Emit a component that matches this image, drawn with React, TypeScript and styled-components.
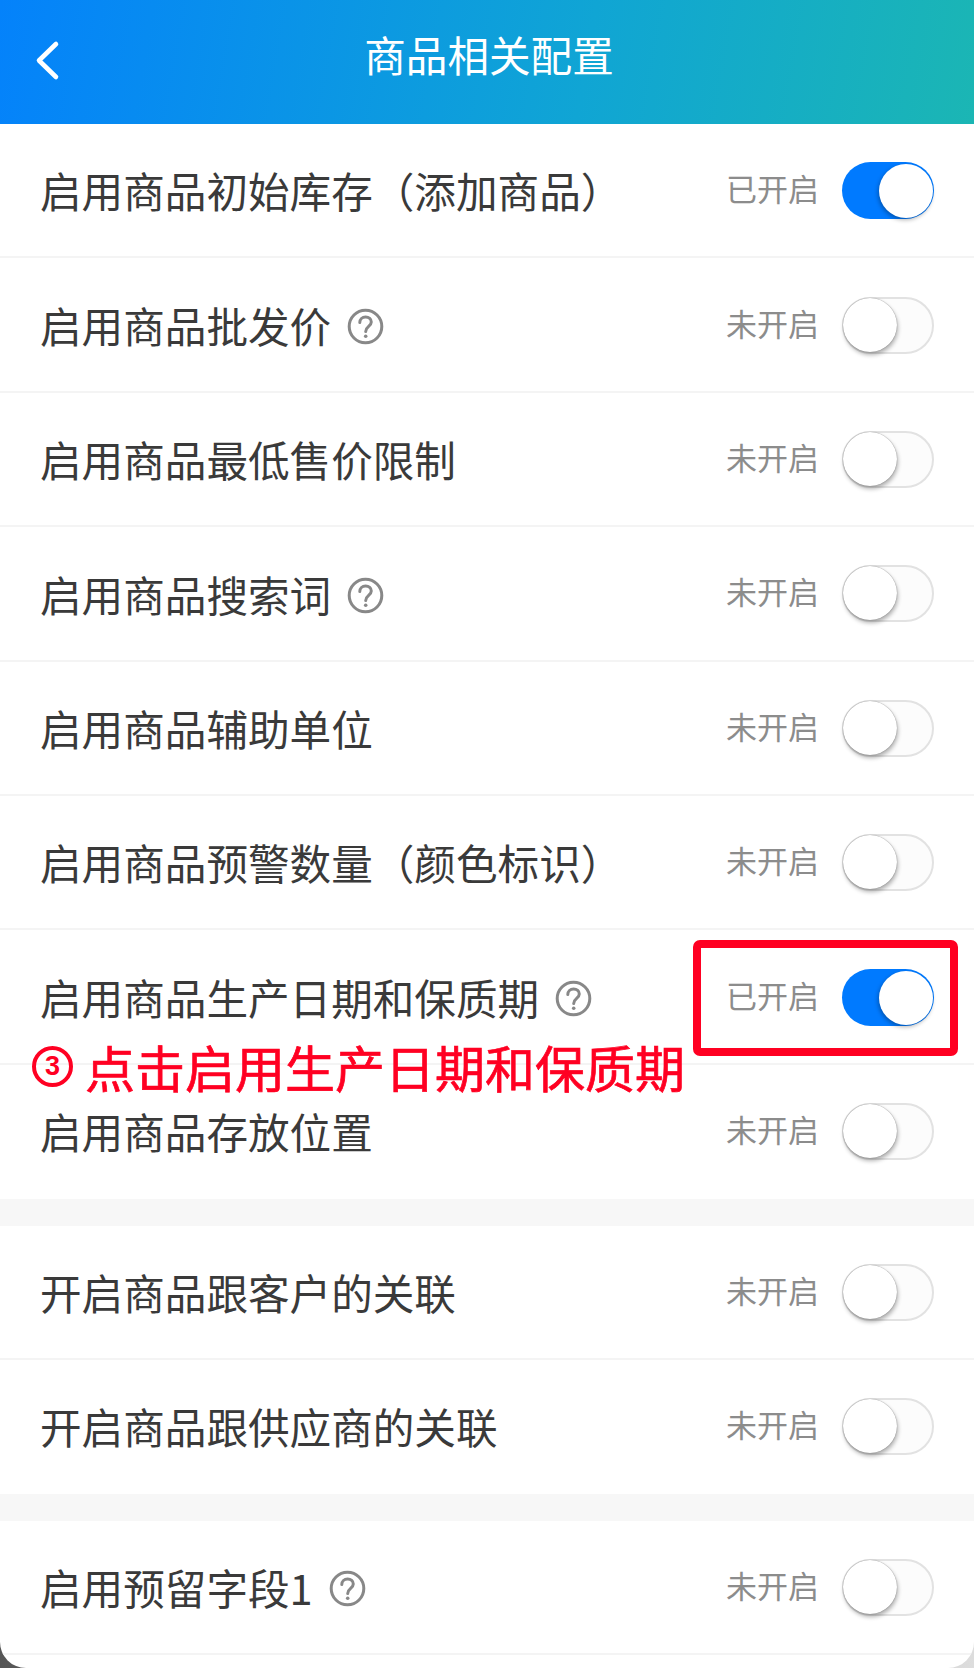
import React from "react";
import styled, { createGlobalStyle } from "styled-components";

// Type definitions
interface ConfigItem {
  label: string;
  enabled?: boolean;
  help?: boolean;
}

const CJK_FONT = `"Noto Sans CJK SC", "Noto Sans", sans-serif`;

const GlobalStyle = createGlobalStyle`
  html, body {
    margin: 0;
    padding: 0;
    background: linear-gradient(90deg, #555 0%, #ddd 100%);
  }
  body {
    font-family: ${CJK_FONT};
  }
`;

// Styled components
const Page = styled.div`
  position: relative;
  width: 974px;
  height: 1668px;
  overflow: hidden;
  background: #fff;
  border-radius: 0 0 26px 26px;
`;

const Header = styled.header`
  display: flex;
  align-items: center;
  justify-content: center;
  position: relative;
  height: 124px;
  background: linear-gradient(100deg, #0482fb 0%, #10a5d4 60%, #1bb6b4 100%);
`;

const BackButton = styled.span`
  position: absolute;
  left: 32px;
  top: 37px;
  display: flex;
`;

const Title = styled.h1`
  margin: 0 0 14px 4px;
  font-size: 41.6px;
  font-weight: 400;
  line-height: 1;
  color: #fff;
`;

const Row = styled.div<{ $last?: boolean }>`
  display: flex;
  align-items: center;
  box-sizing: border-box;
  height: 134.4px;
  padding: 0 40px 2px 40px;
  border-bottom: 2px solid ${(p) => (p.$last ? "#fff" : "#f4f4f4")};
`;

const Label = styled.span`
  font-size: 41.6px;
  line-height: 1;
  color: #3a3a3a;
  padding-top: 4px;
`;

const HelpIcon = styled.svg`
  width: 37px;
  height: 37px;
  margin-left: 16px;
  margin-top: 6px;
`;

const Status = styled.span`
  margin-left: auto;
  margin-right: 23px;
  margin-bottom: 3px;
  font-size: 31px;
  line-height: 1;
  color: #8c8c8c;
`;

const Track = styled.span<{ $on: boolean }>`
  position: relative;
  flex: none;
  box-sizing: border-box;
  width: 92px;
  height: 57px;
  margin-top: 3px;
  border-radius: 29px;
  background: ${(p) => (p.$on ? "#007aff" : "#fcfcfc")};
  border: ${(p) => (p.$on ? "none" : "2px solid #e2e2e2")};
`;

const Knob = styled.span<{ $on: boolean }>`
  position: absolute;
  top: ${(p) => (p.$on ? "2px" : "-1px")};
  ${(p) => (p.$on ? "right: 1px;" : "left: -1px;")}
  width: 54px;
  height: 54px;
  border-radius: 50%;
  background: #fff;
  box-shadow: ${(p) =>
    p.$on
      ? "-1px 2px 4px rgba(0, 0, 0, 0.3)"
      : "0 0 1px rgba(0, 0, 0, 0.5), 1px 3px 4px rgba(0, 0, 0, 0.3)"};
`;

const Gap = styled.div`
  height: 26.4px;
  background: #f7f7f7;
`;

const HighlightBox = styled.div`
  position: absolute;
  left: 693px;
  top: 940px;
  box-sizing: border-box;
  width: 265px;
  height: 116px;
  border: 8px solid #ff0022;
  border-radius: 7px;
`;

const Annotation = styled.div`
  position: absolute;
  left: 32px;
  top: 1036px;
  display: flex;
  align-items: center;
  gap: 12px;
  color: #ff0022;
`;

const StepBadge = styled.span`
  display: flex;
  align-items: center;
  justify-content: center;
  box-sizing: border-box;
  width: 41px;
  height: 41px;
  border: 4.5px solid #ff0022;
  border-radius: 50%;
  font-family: "Liberation Sans", sans-serif;
  font-size: 27px;
  font-weight: 700;
  line-height: 1;
`;

const AnnotationText = styled.span`
  font-size: 50px;
  font-weight: 400;
  line-height: 60px;
  white-space: nowrap;
  -webkit-text-stroke: 0.7px #ff0022;
`;

// Data
const groupOne: ConfigItem[] = [
  { label: "启用商品初始库存（添加商品）", enabled: true },
  { label: "启用商品批发价", help: true },
  { label: "启用商品最低售价限制" },
  { label: "启用商品搜索词", help: true },
  { label: "启用商品辅助单位" },
  { label: "启用商品预警数量（颜色标识）" },
  { label: "启用商品生产日期和保质期", enabled: true, help: true },
  { label: "启用商品存放位置" },
];

const groupTwo: ConfigItem[] = [
  { label: "开启商品跟客户的关联" },
  { label: "开启商品跟供应商的关联" },
];

const groupThree: ConfigItem[] = [{ label: "启用预留字段1", help: true }];

// Reusable components
const Help: React.FC = () => (
  <HelpIcon viewBox="0 0 37 37" fill="none" stroke="#888" strokeWidth="3">
    <circle cx="18.5" cy="18.5" r="16.3" />
    <path d="M12.8 14.6c0-3.4 2.5-5.6 5.8-5.6s5.7 2.1 5.7 5c0 4.4-5.6 4.4-5.6 9.4" strokeLinecap="round" />
    <circle cx="18.7" cy="28.2" r="1.8" fill="#888" stroke="none" />
  </HelpIcon>
);

const ConfigRow: React.FC<{ item: ConfigItem; last?: boolean }> = ({ item, last }) => {
  const on = !!item.enabled;
  return (
    <Row $last={last}>
      <Label>{item.label}</Label>
      {item.help && <Help />}
      <Status>{on ? "已开启" : "未开启"}</Status>
      <Track $on={on}>
        <Knob $on={on} />
      </Track>
    </Row>
  );
};

const App: React.FC = () => (
  <Page>
    <GlobalStyle />
    <Header>
      <BackButton>
        <svg width="30" height="46" viewBox="0 0 30 46" fill="none">
          <path
            d="M24 7 7 23.5 24 40"
            stroke="#fff"
            strokeWidth="4.6"
            strokeLinecap="round"
            strokeLinejoin="round"
          />
        </svg>
      </BackButton>
      <Title>商品相关配置</Title>
    </Header>
    {groupOne.map((item, i) => (
      <ConfigRow key={item.label} item={item} last={i === groupOne.length - 1} />
    ))}
    <Gap />
    {groupTwo.map((item, i) => (
      <ConfigRow key={item.label} item={item} last={i === groupTwo.length - 1} />
    ))}
    <Gap />
    {groupThree.map((item) => (
      <ConfigRow key={item.label} item={item} />
    ))}
    <HighlightBox />
    <Annotation>
      <StepBadge>3</StepBadge>
      <AnnotationText>点击启用生产日期和保质期</AnnotationText>
    </Annotation>
  </Page>
);

export default App;
